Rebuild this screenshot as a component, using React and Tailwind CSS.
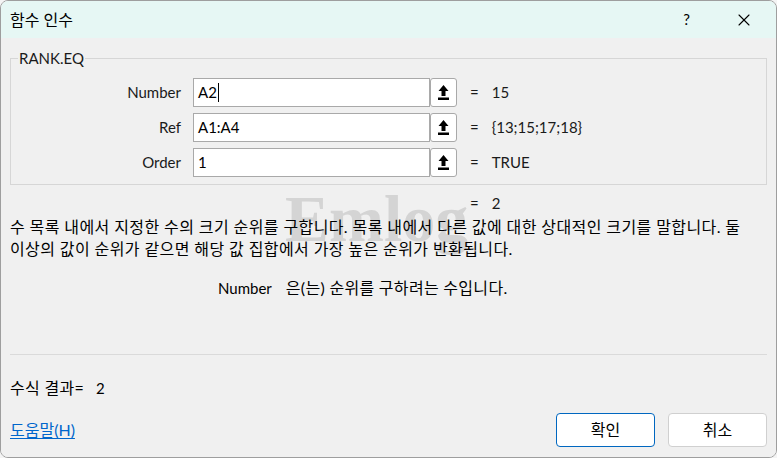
import { X } from 'lucide-react';

const FONT = "font-['Lato','Noto_Sans_CJK_KR',sans-serif]";

function RefButton() {
  return (
    <button className="w-[27px] h-[29px] bg-white border border-[#a9a9a9] rounded-[3px] flex items-center justify-center">
      <svg width="11" height="15" viewBox="0 0 11 15">
        <path d="M5.5 0 L10.5 6 L7.5 6 L7.5 11 L3.5 11 L3.5 6 L0.5 6 Z" fill="#000" />
        <rect x="0" y="12.5" width="11" height="2.5" fill="#000" />
      </svg>
    </button>
  );
}

function ArgRow({ label, value, result, caret }) {
  return (
    <div className="flex items-center h-[29px]">
      <div className="w-[170px] text-right text-[15px] text-[#1a1a1a]">{label}</div>
      <div className="ml-[12px] flex items-center">
        <div className="w-[237px] h-[29px] bg-white border border-[#a9a9a9] flex items-center pl-[4px] text-[15px] text-black">
          {value}
          {caret && <span className="w-px h-[19px] bg-black ml-[1px]" />}
        </div>
        <RefButton />
      </div>
      <div className="ml-[13px] text-[15px] text-[#1a1a1a]">=</div>
      <div className="ml-[13px] text-[15px] text-[#1a1a1a]">{result}</div>
    </div>
  );
}

export default function App() {
  return (
    <div className={`w-[777px] h-[458px] bg-[#f4f4f4] ${FONT}`}>
      <div className="h-full flex flex-col rounded-[8px] border border-[#9e9e9e] overflow-hidden">
        {/* Title bar */}
        <div className="h-[37px] flex items-center bg-[#e6f7f4] pl-[9px] pr-[22px] shrink-0">
          <span className="text-[16px] text-black">함수 인수</span>
          <span className="ml-auto text-[15px] text-black">?</span>
          <X size={20} strokeWidth={1.3} className="ml-[44px] text-black" />
        </div>

        {/* Body */}
        <div className="relative flex-1 bg-[#f0f0f0] px-[9px] flex flex-col">
          <fieldset className="mt-[12px] border border-[#d6d6d6] px-0 pb-[7px] pt-[12px] flex flex-col gap-[6px]">
            <legend className="ml-[7px] px-[1px] text-[15px] text-[#1a1a1a] leading-[16px]">RANK.EQ</legend>
            <ArgRow label="Number" value="A2" result="15" caret />
            <ArgRow label="Ref" value="A1:A4" result="{13;15;17;18}" />
            <ArgRow label="Order" value="1" result="TRUE" />
          </fieldset>

          <div className="flex mt-[7px] h-[22px] items-center text-[15px] text-[#1a1a1a]">
            <span className="ml-[460px]">=</span>
            <span className="ml-[13px]">2</span>
          </div>

          {/* watermark */}
          <div className="absolute left-[284px] top-[148px] font-['Liberation_Serif',serif] font-bold text-[66px] leading-none text-[#d4d4d4] pointer-events-none select-none">
            Emlog
          </div>

          <p className="relative mt-[2px] text-[16px] tracking-[0.4px] leading-[22px] text-black">
            수 목록 내에서 지정한 수의 크기 순위를 구합니다. 목록 내에서 다른 값에 대한 상대적인 크기를 말합니다. 둘
            <br />
            이상의 값이 순위가 같으면 해당 값 집합에서 가장 높은 순위가 반환됩니다.
          </p>

          <div className="mt-[16px] flex items-center text-black">
            <span className="ml-[208px] text-[15px]">Number</span>
            <span className="ml-[14px] text-[16px] tracking-[0.3px]">은(는) 순위를 구하려는 수입니다.</span>
          </div>

          <div className="mt-[54px] border-t border-[#dadada]" />

          <div className="mt-[21px] flex items-center text-black">
            <span className="text-[16px] tracking-[0.3px]">수식 결과=</span>
            <span className="ml-[12px] text-[15px]">2</span>
          </div>

          <div className="mt-[13px] flex items-center">
            <a href="#" className="text-[16px] text-[#0066cc] underline underline-offset-2">도움말(H)</a>
            <button className="ml-auto w-[99px] h-[34px] bg-white border border-[#0067c0] rounded-[4px] text-[16px] text-black">확인</button>
            <button className="ml-[13px] w-[99px] h-[34px] bg-white border border-[#d0d0d0] rounded-[4px] text-[16px] text-black">취소</button>
          </div>
        </div>
      </div>
    </div>
  );
}
